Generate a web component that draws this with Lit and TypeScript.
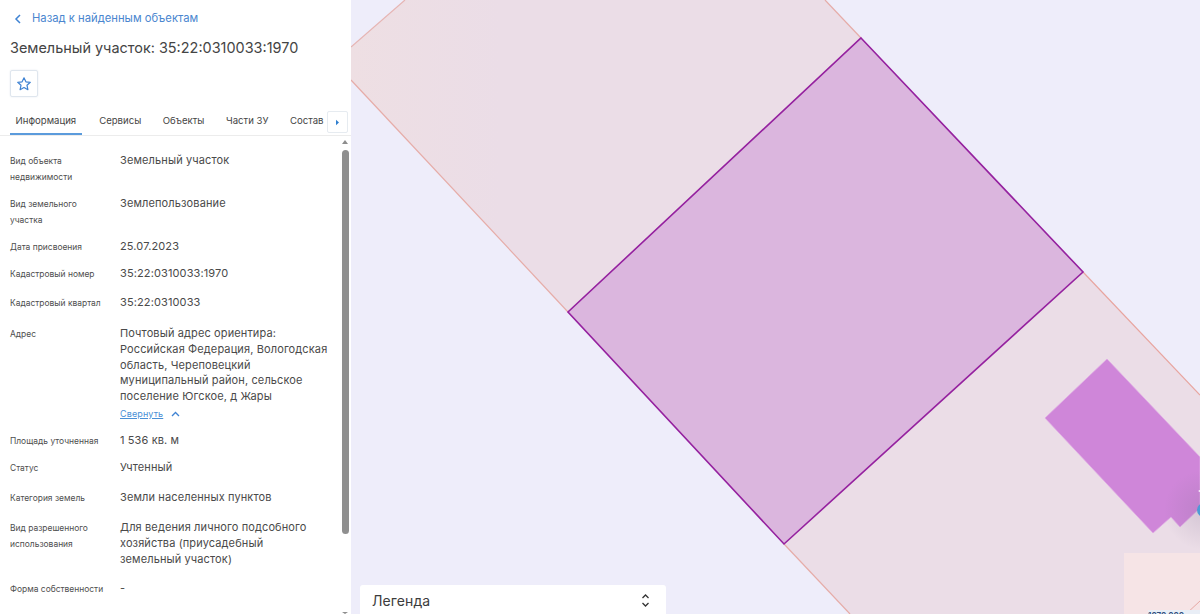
import { LitElement, html, css, svg } from "lit";
import { customElement } from "lit/decorators.js";

interface Row { label: string[]; value?: string[]; next: number; link?: boolean; }

const rows: Row[] = [
  { label: ["Вид объекта", "недвижимости"], value: ["Земельный участок"], next: 11 },
  { label: ["Вид земельного", "участка"], value: ["Землепользование"], next: 11 },
  { label: ["Дата присвоения"], value: ["25.07.2023"], next: 11 },
  { label: ["Кадастровый номер"], value: ["35:22:0310033:1970"], next: 13 },
  { label: ["Кадастровый квартал"], value: ["35:22:0310033"], next: 15 },
  {
    label: ["Адрес"],
    value: ["Почтовый адрес ориентира:", "Российская Федерация, Вологодская", "область, Череповецкий", "муниципальный район, сельское", "поселение Югское, д Жары"],
    link: true,
    next: 11,
  },
  { label: ["Площадь уточненная"], value: ["1 536 кв. м"], next: 11 },
  { label: ["Статус"], value: ["Учтенный"], next: 14 },
  { label: ["Категория земель"], value: ["Земли населенных пунктов"], next: 14 },
  { label: ["Вид разрешенного", "использования"], value: ["Для ведения личного подсобного", "хозяйства (приусадебный", "земельный участок)"], next: 14 },
  { label: ["Форма собственности"], value: ["-"], next: 0 },
];

const tabs = ["Информация", "Сервисы", "Объекты", "Части ЗУ", "Состав"];

@customElement("app-root")
export class AppRoot extends LitElement {
  static styles = css`
    :host { display: block; width: 1200px; height: 614px; overflow: hidden; font-family: Inter, "Noto Sans", sans-serif; color: #454545; }
    .page { display: flex; height: 614px; }
    .panel { width: 351px; flex: none; background: #fff; display: flex; flex-direction: column; overflow: hidden; }
    .back { display: flex; align-items: center; gap: 10px; padding: 11px 0 0 14px; height: 15px; color: #4a86cf; font-size: 11.25px; line-height: 15px; }
    .back svg { display: block; }
    h1 { margin: 12px 0 0 10px; font-size: 14.45px; line-height: 20px; font-weight: 400; color: #444; white-space: nowrap; }
    .star { box-sizing: border-box; width: 28px; height: 27px; margin: 12px 0 0 10px; border: 1px solid #dfe6ee; border-radius: 2px; display: flex; align-items: center; justify-content: center; box-shadow: 0 0 2px #e4e9ef; }
    .tabbar { position: relative; height: 38px; display: flex; padding: 0 0 0 10px; border-bottom: 1px solid #ececec; }
    .tab { padding: 17px 5.5px 0; margin-right: 10.5px; height: 38px; box-sizing: border-box; font-size: 9.6px; line-height: 14px; white-space: nowrap; color: #454545; }
    .tab.on { border-bottom: 2px solid #5b9bdc; margin-right: 12px; }
    .more { position: absolute; left: 327px; top: 14px; width: 21px; height: 22px; background: #fff; border: 1px solid #e6ebf0; border-radius: 2px; box-sizing: border-box; display: flex; align-items: center; justify-content: center; }
    .body { position: relative; flex: 1; min-height: 0; padding: 17px 0 0 10px; overflow: hidden; }
    .row { display: grid; grid-template-columns: 110px 222px; }
    .label { font-size: 8.45px; line-height: 16px; color: #4e4e4e; white-space: nowrap; }
    .value { font-size: 11px; line-height: 15.8px; letter-spacing: 0.12px; color: #4a4a4a; white-space: nowrap; }
    .toggle { display: flex; align-items: center; gap: 8px; margin-top: 1px; font-size: 9px; line-height: 16px; color: #4a8fd6; }
    .toggle span { text-decoration: underline; }
    .bar { position: absolute; left: 342px; top: 14px; width: 7px; height: 384px; border-radius: 4px; background: #8f8f8f; }
    .arrow { position: absolute; left: 342px; width: 0; height: 0; border-left: 3.5px solid transparent; border-right: 3.5px solid transparent; }
    .arrow.up { top: 4px; border-bottom: 4px solid #8d8d8d; }
    .arrow.down { bottom: 0; border-top: 2px solid #8d8d8d; border-bottom: 0; }
    .map { position: relative; flex: 1; min-width: 0; background: #eeedfa; overflow: hidden; }
    .map svg.canvas { display: block; }
    .legend { position: absolute; left: 9px; bottom: 0; width: 306px; height: 29px; box-sizing: border-box; background: #fff; border-radius: 3px 3px 0 0; display: flex; align-items: center; justify-content: space-between; padding: 1px 16px 0 12px; font-size: 14px; letter-spacing: 0.1px; color: #3c3c3c; }
    .scale { position: absolute; left: 797px; bottom: -6px; width: 60px; font-size: 8px; line-height: 10px; background: #e9eef6; color: #2f4f7f; font-weight: 600; white-space: nowrap; overflow: hidden; }
  `;

  private mapArt() {
    return svg`
      <svg class="canvas" width="849" height="614" viewBox="351 0 849 614">
        <defs>
          <linearGradient id="warm" x1="351" x2="500" y1="0" y2="0" gradientUnits="userSpaceOnUse">
            <stop offset="0" stop-color="#eedfe3"/>
            <stop offset="1" stop-color="#ebdde7"/>
          </linearGradient>
          <radialGradient id="shade" cx="1204" cy="510" r="40" gradientUnits="userSpaceOnUse">
            <stop offset="0" stop-color="#7f6f90" stop-opacity="0.22"/>
            <stop offset="1" stop-color="#7f6f90" stop-opacity="0"/>
          </radialGradient>
        </defs>
        <polygon points="405,0 825,0 861,38 568,312 351,80 351,47" fill="url(#warm)"/>
        <polyline points="351,47 405,0" fill="none" stroke="#e6b5b3" stroke-width="1.2"/>
        <polyline points="825,0 861,38" fill="none" stroke="#e6aca8" stroke-width="1.2"/>
        <polyline points="351,80 568,312" fill="none" stroke="#e6aca8" stroke-width="1.2"/>
        <polygon points="1083,272 1200,395 1200,614 850,614 784,544" fill="#ebdde7"/>
        <polyline points="1083,272 1200,395" fill="none" stroke="#e8a59f" stroke-width="1.2"/>
        <polyline points="784,544 850,614" fill="none" stroke="#e6aca8" stroke-width="1.2"/>
        <rect x="1124" y="553" width="76" height="61" fill="#f6e4e6"/>
        <line x1="1186" y1="614" x2="1200" y2="601" stroke="#e6a9a5" stroke-width="1"/>
        <polygon points="861,38 1083,272 784,544 568,312" fill="#dbb6de" stroke="#95219f" stroke-width="1.6" stroke-linejoin="miter"/>
        <polygon points="1107,359 1045,418 1153,533 1171,517 1180,527 1200,508 1200,457" fill="#cf86d9" stroke="#e0a8e4" stroke-width="0.8"/>
        <circle cx="1204" cy="510" r="40" fill="url(#shade)"/>
        <circle cx="1204" cy="510" r="7" fill="#4d9bd6"/>
        <circle cx="1199.500" cy="491" r="1" fill="#f4e6f5"/>
      </svg>
    `;
  }

  render() {
    return html`
      <div class="page">
        <aside class="panel">
          <div class="back">
            <svg width="8" height="10" viewBox="0 0 8 10"><path d="M6 1 2 5l4 4" fill="none" stroke="#3f83d3" stroke-width="1.5"/></svg>
            <span>Назад к найденным объектам</span>
          </div>
          <h1>Земельный участок: 35:22:0310033:1970</h1>
          <div class="star">
            <svg width="16" height="16" viewBox="0 0 16 16"><path d="M8 1.800l1.900 4 4.400.5-3.300 3 .9 4.400L8 11.500l-3.900 2.200.9-4.400-3.300-3 4.400-.5z" fill="none" stroke="#3f83d3" stroke-width="1.2" stroke-linejoin="round"/></svg>
          </div>
          <nav class="tabbar">
            ${tabs.map((t, i) => html`<div class="tab ${i === 0 ? "on" : ""}">${t}</div>`)}
            <div class="more">
              <svg width="5" height="7" viewBox="0 0 5 7"><path d="M1 .8 4 3.500 1 6.200z" fill="#2f7fcf"/></svg>
            </div>
          </nav>
          <div class="body">
            ${rows.map(
              (r) => html`
                <div class="row" style="margin-bottom:${r.next}px">
                  <div class="label">${r.label.map((l) => html`<div>${l}</div>`)}</div>
                  <div class="value">
                    ${r.value?.map((l) => html`<div>${l}</div>`)}
                    ${r.link
                      ? html`<div class="toggle"><span>Свернуть</span>
                          <svg width="9" height="6" viewBox="0 0 9 6"><path d="M1 5l3.500-3.500L8 5" fill="none" stroke="#3f83d3" stroke-width="1.3"/></svg></div>`
                      : ""}
                  </div>
                </div>
              `,
            )}
            <div class="arrow up"></div>
            <div class="bar"></div>
            <div class="arrow down"></div>
          </div>
        </aside>
        <main class="map">
          ${this.mapArt()}
          <div class="legend">
            <span>Легенда</span>
            <svg width="9" height="15" viewBox="0 0 9 15"><path d="M1.500 5 4.500 2l3 3M1.500 10l3 3 3-3" fill="none" stroke="#333" stroke-width="1.3"/></svg>
          </div>
          <div class="scale">1070 000</div>
        </main>
      </div>
    `;
  }
}
